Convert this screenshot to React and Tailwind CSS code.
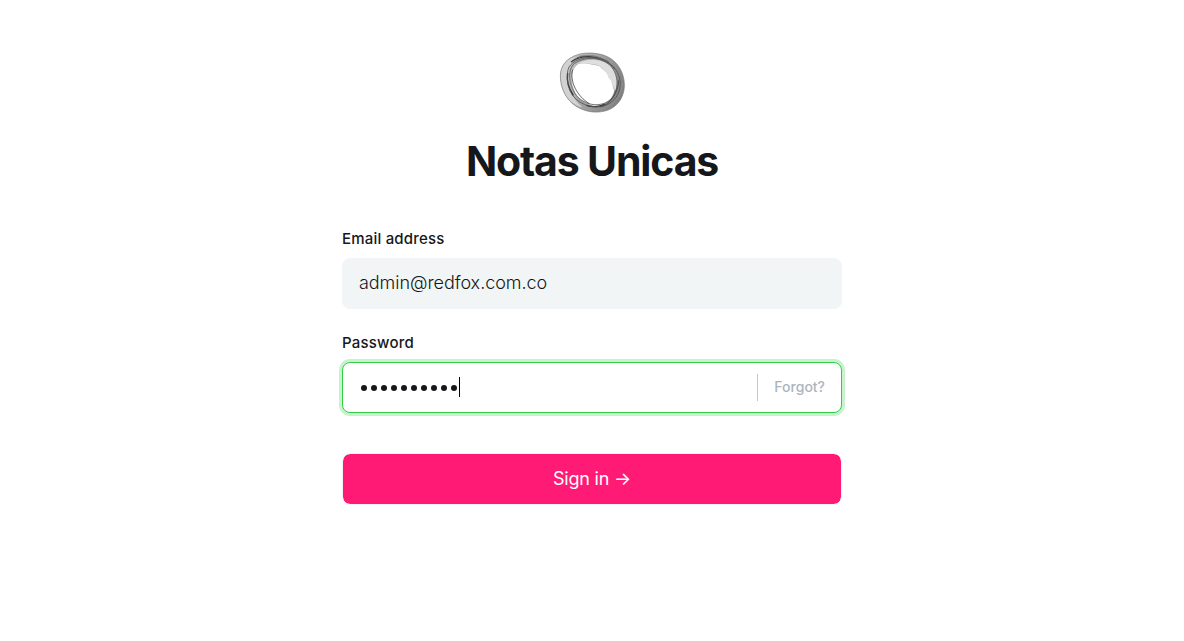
import { useState } from "react";

function Logo() {
  return (
    <svg width="80" height="76" viewBox="0 0 240 228" fill="none" aria-hidden="true">
      <defs>
        <linearGradient id="band" x1="30" y1="80" x2="215" y2="150" gradientUnits="userSpaceOnUse">
          <stop offset="0" stopColor="#c8c8c8" />
          <stop offset="0.5" stopColor="#a0a0a0" />
          <stop offset="1" stopColor="#7e7e7e" />
        </linearGradient>
      </defs>
      <path
        fill="url(#band)"
        d="M26 84C31 54 56 36 88 29C122 24 157 29 181 47C206 66 219 99 217 130C214 163 196 188 166 199C138 208 110 205 86 194C49 179 20 134 26 84Z"
      />
      <path fill="#d2d2d2" d="M28 84C34 56 48 43 69 40C45 68 46 106 56 139C64 164 77 179 92 190C50 182 21 136 28 84Z" />
      <path fill="#dedede" d="M76 59C103 42 151 42 176 66C195 84 200 116 190 140C183 133 181 111 170 99C163 82 151 76 143 66C124 59 101 58 76 59Z" />
      <path fill="#ffffff" d="M79 60C59 73 54 104 65 134C75 166 102 181 132 187C161 185 184 163 187 139C181 127 182 111 170 100C166 83 151 78 143 67C123 61 98 55 79 60Z" />
      <path stroke="#777777" strokeWidth="2" d="M26 84C31 54 56 36 88 29C122 24 157 29 181 47C206 66 219 99 217 130C214 163 196 188 166 199C138 208 110 205 86 194C49 179 20 134 26 84Z" />
      <path stroke="#3d3d3d" strokeWidth="4" d="M57 54C88 31 137 34 170 54M47 87C44 108 50 133 64 154M103 184C123 191 147 188 158 179" />
      <path stroke="#505050" strokeWidth="2.5" d="M51 69C75 34 140 31 179 63C209 89 214 137 187 166C156 201 91 194 61 153C45 129 41 91 51 69Z" />
      <path stroke="#555" strokeWidth="2.5" d="M63 62C90 40 134 34 171 61C199 86 203 132 181 161C151 195 95 186 69 149C53 122 45 87 63 62Z" />
      <path stroke="#454545" strokeWidth="2.5" d="M74 42C114 25 163 40 188 75M62 77C52 111 75 157 112 179M200 109C199 145 176 180 145 189" />
      <path stroke="#969696" strokeWidth="2" d="M54 97C55 132 72 161 96 177M80 36C118 29 164 40 192 73M211 116C211 157 178 190 145 196" />
    </svg>
  );
}

export default function App() {
  const [email, setEmail] = useState("admin@redfox.com.co");
  return (
    <main className="flex h-[641px] w-full justify-center bg-white font-['Inter',sans-serif] text-[#15171a]">
      <form className="flex w-[500px] flex-col pt-11" onSubmit={(event) => event.preventDefault()}>
        <header className="flex flex-col items-center">
          <Logo />
          <h1 className="mt-4 text-[41px] leading-[50px] font-bold tracking-[-1.15px] whitespace-nowrap">Notas Unicas</h1>
        </header>

        <label htmlFor="email" className="mt-[43px] text-[15px] leading-5 font-medium tracking-[0.2px]">Email address</label>
        <input
          id="email"
          type="text"
          value={email}
          onChange={(event) => setEmail(event.target.value)}
          className="mt-[9px] h-[51px] w-full rounded-lg border border-[#f1f5f6] bg-[#f1f5f6] px-4 pb-0.5 text-[18px] font-light tracking-[-0.05px] outline-none"
        />

        <label htmlFor="password" className="mt-6 text-[15px] leading-5 font-medium tracking-[0.2px]">Password</label>
        <div className="mt-[9px] flex h-[51px] items-center rounded-lg border border-[#30cf43] bg-white pr-4 pl-[18px] shadow-[0_0_0_3px_#c8f2cd]">
          <div id="password" role="textbox" className="flex grow items-center gap-0.5 pb-px">
            <div className="flex gap-1 pt-px">
              {Array.from({ length: 10 }, (_, index) => (
                <span key={index} className="size-1.5 rounded-full bg-[#15171a]" />
              ))}
            </div>
            <span className="h-5 w-px bg-black" />
          </div>
          <button type="button" className="h-[27px] border-l border-[#c5c5c5] pb-0.5 pl-4 text-[14px] font-medium text-[#abb4be]">Forgot?</button>
        </div>

        <button type="submit" className="mt-10 h-[52px] w-full rounded-lg border border-[#f1f3f4] bg-[#ff1a75] bg-clip-padding pb-0.5 text-[18px] tracking-[-0.2px] text-white">
          Sign in →
        </button>
      </form>
    </main>
  );
}
